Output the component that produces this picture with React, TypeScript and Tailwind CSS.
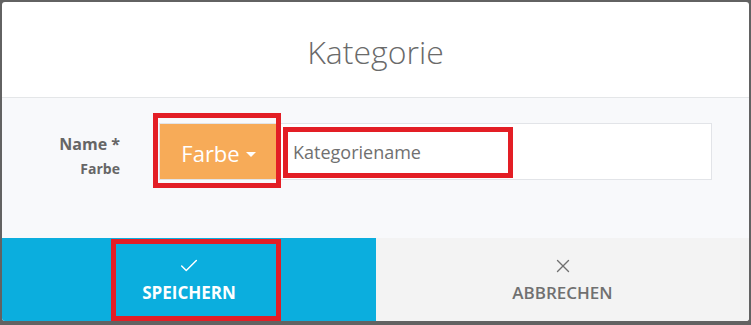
import { Check, X } from "lucide-react";

function RedBox({ className }: { className: string }) {
  // annotation highlight drawn over the dialog
  return (
    <div
      className={`pointer-events-none absolute border-[5px] border-[#e31e25] ${className}`}
    />
  );
}

export default function App() {
  return (
    <div className="h-[325px] w-[751px] bg-[#626262] pl-[2px] pt-[2px] font-['Open_Sans',sans-serif]">
      <div className="relative flex h-[319px] w-[747px] flex-col overflow-hidden rounded-[3px] bg-white">
        <div className="flex h-[96px] items-center justify-center border-b border-[#e4e6e8]">
          <h1 className="mt-[4px] text-[32px] font-light text-[#6a6a6a]">
            Kategorie
          </h1>
        </div>

        <div className="flex h-[140px] bg-[#f8f9fb] pt-[25px]">
          <div className="flex w-[118px] flex-col items-end pt-[13px] leading-none text-[#666]">
            <span className="text-[16px] font-bold">Name *</span>
            <span className="mt-[10px] text-[14px] font-bold">Farbe</span>
          </div>
          <div className="ml-[39px] flex h-[57px] w-[553px] border border-[#e2e4e8] bg-white">
            <button className="flex w-[117px] items-center justify-center gap-[6px] bg-[#f7ab58] pt-[3px] text-[22px] text-white">
              Farbe
              <span className="mt-[3px] h-0 w-0 border-x-[5px] border-t-[5px] border-x-transparent border-t-white" />
            </button>
            <div className="flex flex-1 items-center pl-[16px] pt-[2px] text-[18px] text-[#707070]">
              Kategoriename
            </div>
          </div>
        </div>

        <div className="flex h-[83px]">
          <button className="flex w-[374px] flex-col items-center bg-[#0baede] pt-[17px] text-white">
            <Check size={22} strokeWidth={1.6} />
            <span className="mt-[3px] text-[17px] font-bold">SPEICHERN</span>
          </button>
          <button className="flex flex-1 flex-col items-center bg-[#f3f3f3] pt-[17px] text-[#707070]">
            <X size={22} strokeWidth={1.5} />
            <span className="mt-[3px] text-[17px] font-semibold">ABBRECHEN</span>
          </button>
        </div>

        <RedBox className="left-[151px] top-[111px] h-[75px] w-[128px]" />
        <RedBox className="left-[281px] top-[125px] h-[51px] w-[230px]" />
        <RedBox className="left-[109px] top-[237px] h-[82px] w-[170px]" />
      </div>
    </div>
  );
}
